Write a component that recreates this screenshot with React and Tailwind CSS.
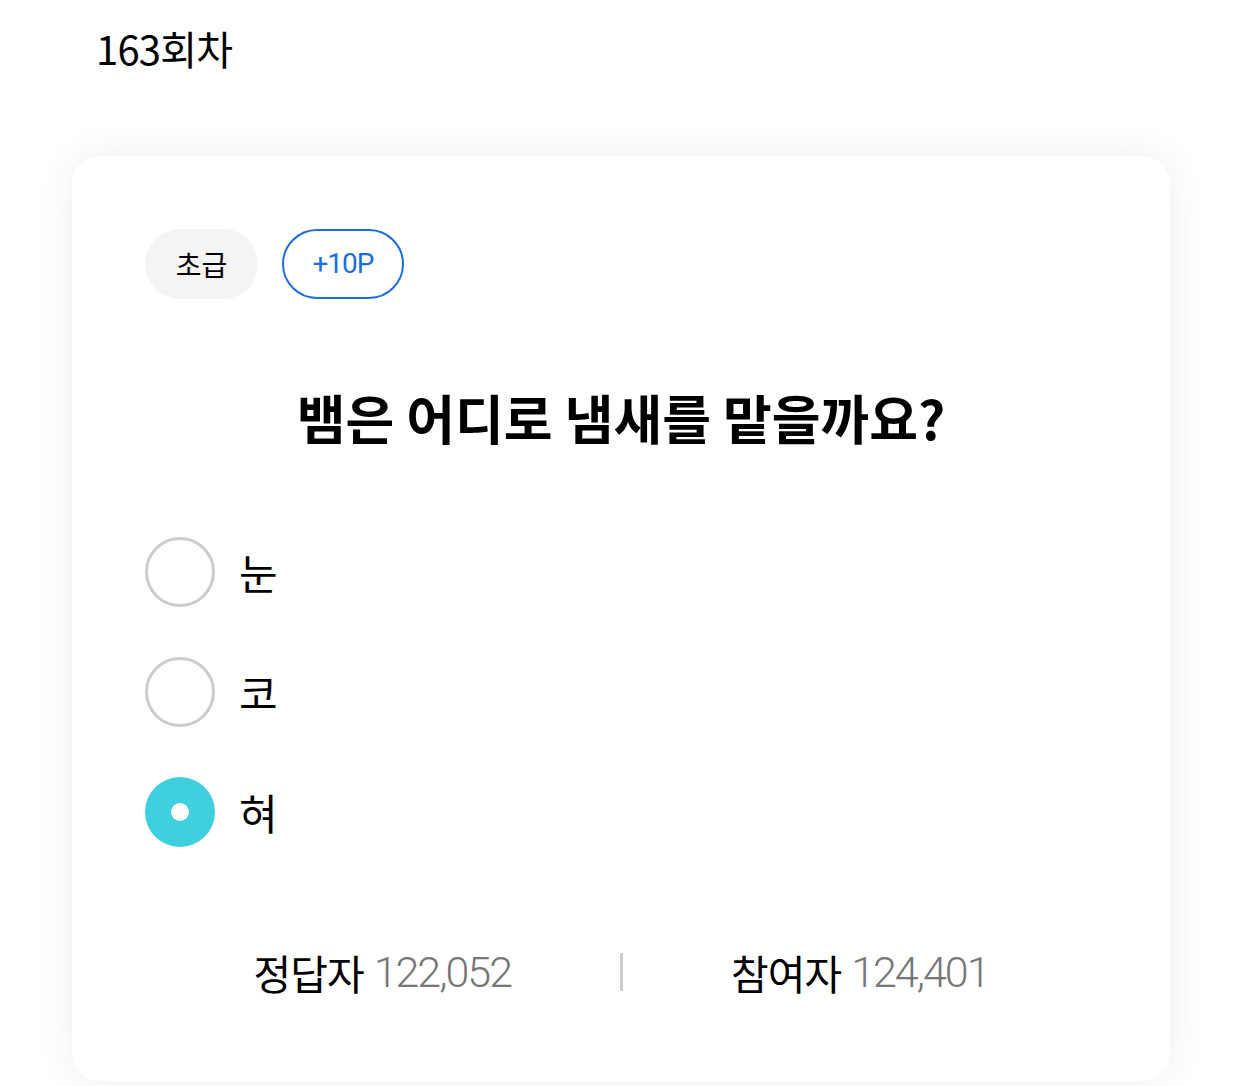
const FONT = { fontFamily: '"Noto Sans CJK KR", "Noto Sans", sans-serif' };
const NUM = { fontFamily: 'Roboto, "Noto Sans CJK KR", sans-serif' };

const options = [
  { label: "눈", checked: false },
  { label: "코", checked: false },
  { label: "혀", checked: true },
];

function Radio({ checked }) {
  if (checked) {
    return (
      <div className="flex h-[70px] w-[70px] items-center justify-center rounded-full bg-[#3fd0e0]">
        <div className="h-[18px] w-[18px] rounded-full bg-white" />
      </div>
    );
  }
  return <div className="h-[70px] w-[70px] rounded-full border-[3px] border-[#cccccc] bg-white" />;
}

export default function App() {
  return (
    <div className="min-h-[1086px] bg-white text-black" style={FONT}>
      <div className="pl-[96px] pt-[20px] text-[40px] leading-[56px] tracking-[-0.8px]">163회차</div>

      <div className="ml-[72px] mt-[80px] w-[1098px] rounded-[28px] bg-white pb-[76px] pl-[73px] pr-[73px] pt-[73px] shadow-[0_0_40px_rgba(0,0,0,0.07)]">
        <div className="flex gap-[24px]">
          <div className="flex h-[70px] w-[113px] items-center justify-center rounded-full bg-[#f4f4f4] text-[28px]">
            초급
          </div>
          <div className="flex h-[70px] w-[122px] items-center justify-center rounded-full border-[2.5px] border-[#1a6fe0] text-[28px] tracking-[-1px] text-[#1a6fe0]" style={NUM}>
            +10P
          </div>
        </div>

        <h1 className="mt-[86px] text-center text-[53px] font-bold leading-[64px]">
          뱀은 어디로 냄새를 맡을까요?
        </h1>

        <div className="mt-[88px] flex flex-col gap-[50px]">
          {options.map((o) => (
            <div key={o.label} className="flex items-center gap-[24px]">
              <Radio checked={o.checked} />
              <span className="text-[42px] leading-[50px]">{o.label}</span>
            </div>
          ))}
        </div>

        <div className="mt-[93px] flex items-center">
          <div className="flex flex-1 items-center justify-center gap-[10px]">
            <span className="text-[41px] tracking-[-1px]">정답자</span>
            <span className="text-[43px] font-light tracking-[-2px] text-[#777777]" style={NUM}>122,052</span>
          </div>
          <div className="h-[38px] w-[3px] bg-[#cfcfcf]" />
          <div className="flex flex-1 items-center justify-center gap-[10px]">
            <span className="text-[41px] tracking-[-1px]">참여자</span>
            <span className="text-[43px] font-light tracking-[-2px] text-[#777777]" style={NUM}>124,401</span>
          </div>
        </div>
      </div>
    </div>
  );
}
